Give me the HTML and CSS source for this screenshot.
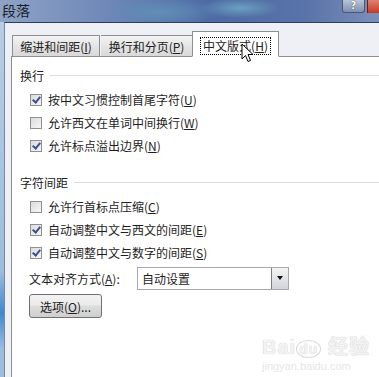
FILE: index.html
```html
<!DOCTYPE html>
<html lang="zh-CN">
<head>
  <meta charset="UTF-8">
  <title>段落</title>
  <link rel="stylesheet" href="styles.css">
</head>
<body>

  <div class="titlebar">
    <span class="title">段落</span>
    <div class="caption-btns">
      <span class="help-btn">?</span>
      <span class="close-btn"></span>
    </div>
  </div>

  <div class="frame">
    <div class="glass-edge"></div>
    <div class="dialog">
      <div class="tabs">
        <div class="tab tab-indent">缩进和间距(<u>I</u>)</div>
        <div class="tab tab-break">换行和分页(<u>P</u>)</div>
        <div class="tab active"><span class="focus">中文版式(<u>H</u>)</span></div>
      </div>

      <div class="panel">
        <div class="group-title"><span>换行</span></div>
        <div class="options">
          <label class="check"><span class="box checked"></span>按中文习惯控制首尾字符(<u>U</u>)</label>
          <label class="check"><span class="box"></span>允许西文在单词中间换行(<u>W</u>)</label>
          <label class="check"><span class="box checked"></span>允许标点溢出边界(<u>N</u>)</label>
        </div>

        <div class="group-title second"><span>字符间距</span></div>
        <div class="options">
          <label class="check"><span class="box"></span>允许行首标点压缩(<u>C</u>)</label>
          <label class="check"><span class="box checked"></span>自动调整中文与西文的间距(<u>E</u>)</label>
          <label class="check"><span class="box checked"></span>自动调整中文与数字的间距(<u>S</u>)</label>
        </div>

        <div class="align-row">
          <span class="align-label">文本对齐方式(<u>A</u>):</span>
          <div class="select">
            <span class="select-value">自动设置</span>
            <span class="select-arrow"></span>
          </div>
        </div>

        <button class="options-btn">选项(<u>O</u>)...</button>

        <div class="watermark">
          <div class="wm-logo">Bai<span class="wm-du">du</span> 经验</div>
          <div class="wm-url">jingyan.baidu.com</div>
        </div>
      </div>
    </div>
  </div>

  <svg class="cursor" width="13" height="20" viewBox="0 0 13 20">
    <path d="M1 1 L1 16 L4.5 12.5 L7 18.5 L9.5 17.5 L7 11.5 L12 11.5 Z" fill="#fff" stroke="#000" stroke-width="1"/>
  </svg>

</body>
</html>
```

FILE: styles.css
```css
body {
  margin: 0;
  width: 379px;
  height: 377px;
  overflow: hidden;
  position: relative;
  font-family: "Noto Sans CJK SC", "Microsoft YaHei", sans-serif;
  font-size: 12px;
  color: #1e1e1e;
  background: #a9c3df;
}

u {
  text-decoration: underline;
  text-underline-offset: 1px;
}

/* window caption */
.titlebar {
  height: 22px;
  display: flex;
  justify-content: space-between;
  background:
    radial-gradient(ellipse 60px 14px at 160px 12px, #5f8fb6 0%, transparent 100%),
    radial-gradient(ellipse 40px 10px at 240px 8px, #6aa0bf 0%, transparent 100%),
    linear-gradient(90deg, #8ea3c7 0%, #6d86b6 30%, #4d6aa4 55%, #5873a8 80%, #7a8fbb 100%);
}

.title {
  font-size: 14px;
  line-height: 20px;
  padding-left: 2px;
  color: #1a1e26;
}

.caption-btns {
  display: flex;
  align-items: flex-start;
  gap: 2px;
}

.help-btn {
  width: 23px;
  height: 13px;
  line-height: 12px;
  text-align: center;
  font-family: "DejaVu Sans", sans-serif;
  font-weight: bold;
  font-size: 10px;
  color: #fff;
  text-shadow: 0 0 1px #000;
  border: 1px solid #4a5878;
  border-top: none;
  border-radius: 0 0 3px 3px;
  background: linear-gradient(#b9c4d8, #8090b0);
  box-sizing: border-box;
}

.close-btn {
  width: 11px;
  height: 13px;
  background: linear-gradient(#e08070, #c53a22);
  border-left: 1px solid #5a2a22;
}

/* dialog body */
.frame {
  display: flex;
  height: 355px;
}

.glass-edge {
  width: 4px;
  background: linear-gradient(#b7cde6 0%, #9cbde0 70%, #3d8ad0 82%, #9cbde0 92%);
}

.dialog {
  flex: 1;
  display: flex;
  flex-direction: column;
  background: #eff0f6;
  border-top: 1px solid #2f3e5f;
  border-left: 1px solid #7a87a4;
  padding: 8px 0 0 6px;
}

.tabs {
  display: flex;
  align-items: flex-end;
  margin-left: 1px;
  margin-bottom: -1px;
  position: relative;
  z-index: 1;
}

.tab {
  height: 22px;
  line-height: 21px;
  box-sizing: border-box;
  text-align: center;
  color: #222;
  border: 1px solid #8c8e94;
  border-bottom-color: #8e8f8f;
  background: linear-gradient(#f3f3f3, #e5e5e5 50%, #d9d9d9);
}

.tab-indent {
  width: 88px;
}

.tab-break {
  width: 92px;
  margin-left: 1px;
  border-left: none;
}

.tab.active {
  width: 87px;
  height: 26px;
  margin-left: -1px;
  background: #fff;
  border-bottom: 1px solid #fff;
  padding-top: 3px;
}

.focus {
  display: inline-block;
  line-height: 16px;
  padding: 0 2px;
  outline: 1px dotted #000;
}

.panel {
  flex: 1;
  position: relative;
  background: #fff;
  border-top: 1px solid #8e8f8f;
  border-left: 1px solid #8e8f8f;
  padding: 10px 0 0 8px;
}

.group-title {
  display: flex;
  align-items: center;
  height: 17px;
  color: #222;
}

.group-title::after {
  content: "";
  flex: 1;
  height: 1px;
  margin-left: 6px;
  background: #dadde3;
}

.group-title.second {
  margin-top: 17px;
}

.options {
  margin-top: 4px;
  padding-left: 10px;
}

.check {
  display: flex;
  align-items: center;
  height: 23px;
}

.box {
  width: 10px;
  height: 10px;
  margin-right: 6px;
  border: 1px solid #8e8f8f;
  background: linear-gradient(135deg, #dcdcdc, #f6f6f6);
  position: relative;
}

.box.checked::after {
  content: "";
  position: absolute;
  left: 3px;
  top: 0px;
  width: 3px;
  height: 6px;
  border: solid #3c4f8f;
  border-width: 0 2px 2px 0;
  transform: rotate(40deg);
}

.align-row {
  display: flex;
  align-items: center;
  margin-top: 3px;
  padding-left: 9px;
}

.align-label {
  width: 108px;
}

.select {
  width: 152px;
  height: 23px;
  box-sizing: border-box;
  display: flex;
  align-items: center;
  justify-content: space-between;
  border: 1px solid #a5a8ae;
}

.select-value {
  padding-left: 4px;
}

.select-arrow {
  width: 17px;
  height: 21px;
  box-sizing: border-box;
  border-left: 1px solid #7b7e84;
  background: linear-gradient(#f4f4f4, #d2d4d8);
  position: relative;
}

.select-arrow::after {
  content: "";
  position: absolute;
  left: 5px;
  top: 8px;
  border-left: 3px solid transparent;
  border-right: 3px solid transparent;
  border-top: 4px solid #111;
}

.options-btn {
  display: block;
  width: 73px;
  height: 24px;
  margin: 4px 0 0 9px;
  padding: 0;
  font-family: inherit;
  font-size: 12px;
  color: #222;
  border: 1px solid #707070;
  border-radius: 3px;
  background: linear-gradient(#f2f2f2 0%, #ebebeb 45%, #dddddd 50%, #cfcfcf 100%);
}

.watermark {
  position: absolute;
  left: 250px;
  top: 274px;
  color: #f3f3f3;
  text-shadow: 0 0 1px #bdbdbd;
  font-family: "Liberation Sans", sans-serif;
}

.wm-logo {
  font-size: 20px;
  font-weight: bold;
  letter-spacing: 1px;
}

.wm-du {
  font-size: 14px;
  border: 1px solid #d6d6d6;
  border-radius: 50%;
  padding: 0 2px;
}

.wm-url {
  font-size: 11px;
  color: #e6e6e6;
  text-shadow: none;
}

.cursor {
  position: absolute;
  left: 241px;
  top: 43px;
  z-index: 2;
}
```
